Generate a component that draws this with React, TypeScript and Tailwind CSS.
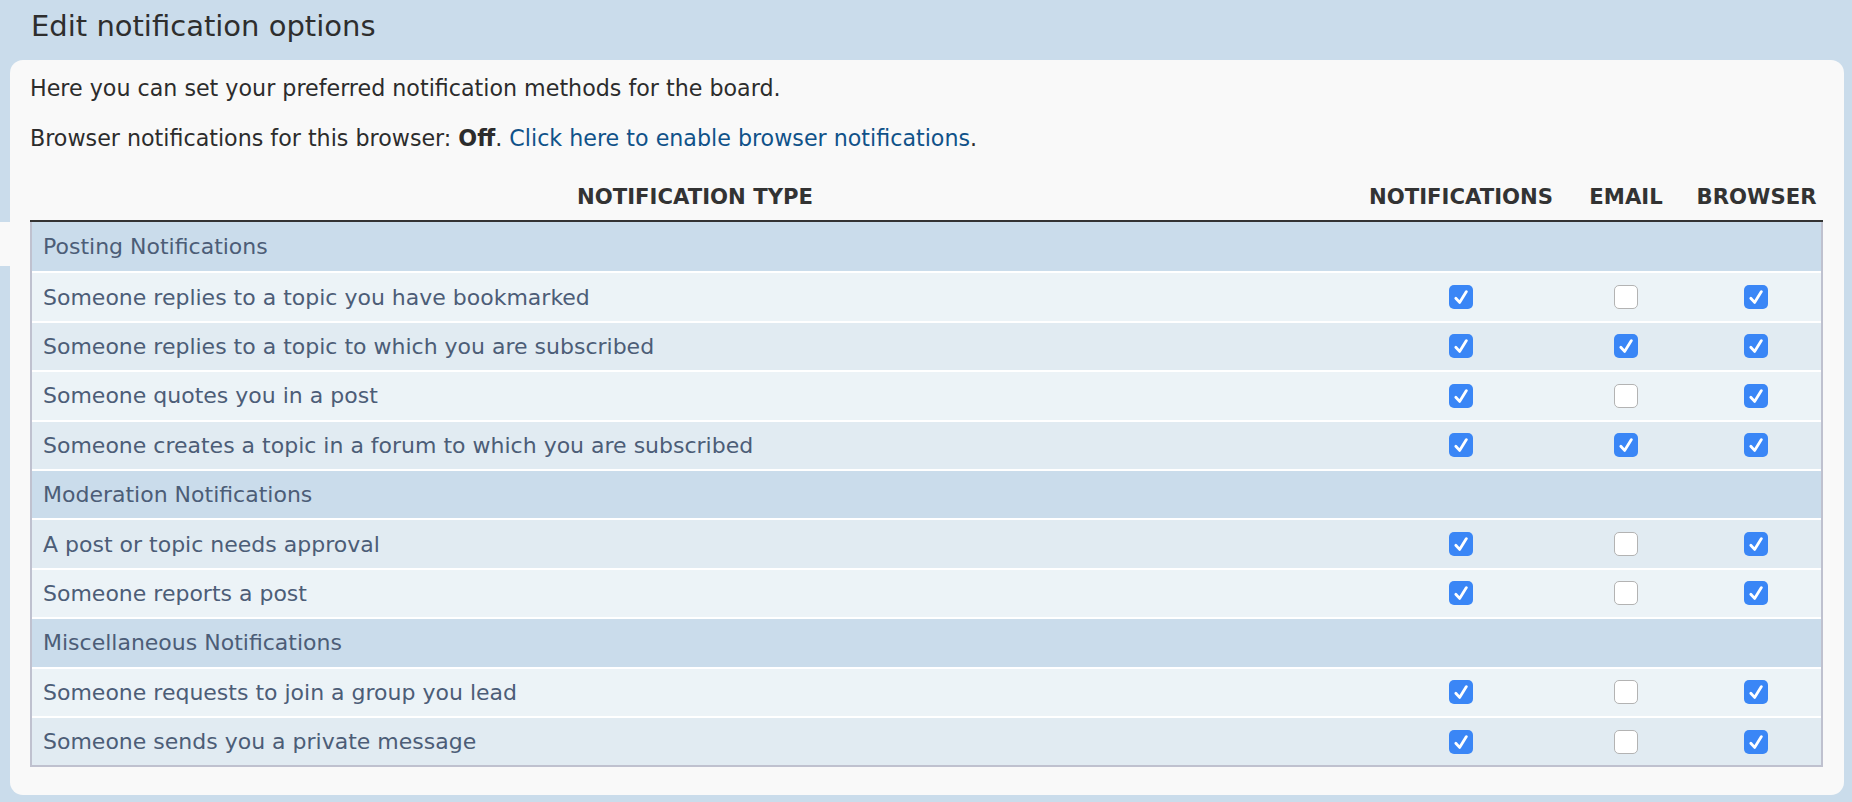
const rows: { label: string; section?: boolean; n?: boolean; e?: boolean; b?: boolean }[] = [
  { label: "Posting Notifications", section: true },
  { label: "Someone replies to a topic you have bookmarked", n: true, e: false, b: true },
  { label: "Someone replies to a topic to which you are subscribed", n: true, e: true, b: true },
  { label: "Someone quotes you in a post", n: true, e: false, b: true },
  { label: "Someone creates a topic in a forum to which you are subscribed", n: true, e: true, b: true },
  { label: "Moderation Notifications", section: true },
  { label: "A post or topic needs approval", n: true, e: false, b: true },
  { label: "Someone reports a post", n: true, e: false, b: true },
  { label: "Miscellaneous Notifications", section: true },
  { label: "Someone requests to join a group you lead", n: true, e: false, b: true },
  { label: "Someone sends you a private message", n: true, e: false, b: true },
];

const Box = ({ checked }: { checked?: boolean }) =>
  checked ? (
    <span className="flex h-[24px] w-[24px] items-center justify-center rounded-[5px] bg-[#3a86f6]">
      <svg width="24" height="24" viewBox="0 0 24 24" fill="none">
        <path d="M6.8 13.2 L10.6 17.4 L17.4 6.6" stroke="white" strokeWidth="2.8" strokeLinecap="round" strokeLinejoin="round" />
      </svg>
    </span>
  ) : (
    <span className="block h-[24px] w-[24px] rounded-[5px] border border-[#b3b3b3] bg-white"></span>
  );

const App = () => {
  return (
    <div className="relative h-[802px] bg-[#cadceb] font-['DejaVu_Sans',sans-serif]">
      {/* odd strip left of the panel */}
      <div className="absolute left-0 top-[222px] h-[44px] w-[10px] bg-[#f9f9f9]"></div>

      <h2 className="h-[60px] pl-[31px] pt-[10px] text-[29px] leading-[32px] text-[#2e2e2e]">
        Edit notification options
      </h2>

      <div className="ml-[10px] mr-[8px] rounded-[13px] bg-[#f9f9f9] pl-[20px] pr-[21px] pb-[28px] pt-[16px]">
        <p className="text-[22.2px] leading-[24px] text-[#2c2c2c]">
          Here you can set your preferred notification methods for the board.
        </p>
        <p className="mt-[26px] text-[22.2px] leading-[24px] text-[#2c2c2c]">
          Browser notifications for this browser: <strong>Off</strong>.{" "}
          <a className="text-[#105289]" href="#">Click here to enable browser notifications</a>.
        </p>

        <div className="mt-[24px] grid h-[48px] grid-cols-[1fr_202px_128px_133px] items-center border-b-2 border-[#333] text-[21.2px] font-bold uppercase text-[#333]">
          <div className="text-center">Notification type</div>
          <div className="text-center">Notifications</div>
          <div className="text-center">Email</div>
          <div className="text-center">Browser</div>
        </div>

        <div className="border-x-2 border-b-2 border-[#bfc1cf]">
          {rows.map((r, i) => (
            <div
              key={r.label}
              className={
                "grid h-[49.4px] grid-cols-[1fr_202px_128px_131px] items-center text-[22px] text-[#4c5d77] " +
                (i > 0 ? "border-t-2 border-white " : "") +
                (r.section ? "bg-[#cadceb]" : i % 2 === 1 ? "bg-[#ecf3f7]" : "bg-[#e1ebf2]")
              }
            >
              <div className="pl-[11px]">{r.label}</div>
              {!r.section && (
                <>
                  <div className="flex justify-center"><Box checked={r.n} /></div>
                  <div className="flex justify-center"><Box checked={r.e} /></div>
                  <div className="flex justify-center"><Box checked={r.b} /></div>
                </>
              )}
            </div>
          ))}
        </div>
      </div>
    </div>
  );
};

export default App;
